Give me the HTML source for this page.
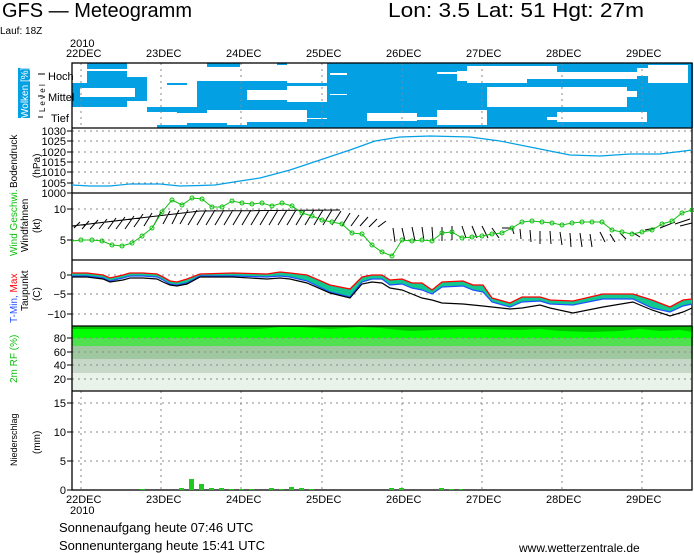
<!DOCTYPE html>
<html><head><meta charset="utf-8"><style>
html,body{margin:0;padding:0;background:#fff;width:694px;height:553px;overflow:hidden}
svg{display:block}
text{font-family:"Liberation Sans",sans-serif;fill:#000}
</style></head><body>
<svg width="694" height="553" viewBox="0 0 694 553" xmlns="http://www.w3.org/2000/svg">
<text x="2" y="17" font-size="20" textLength="190" lengthAdjust="spacingAndGlyphs">GFS — Meteogramm</text>
<text x="388" y="17" font-size="20" textLength="256" lengthAdjust="spacingAndGlyphs">Lon: 3.5 Lat: 51 Hgt: 27m</text>
<text x="0" y="34" font-size="10">Lauf: 18Z</text>
<g font-size="11">
<text x="70" y="47">2010</text>
<text x="66" y="57">22DEC</text><text x="146" y="57">23DEC</text><text x="226" y="57">24DEC</text><text x="306" y="57">25DEC</text>
<text x="386" y="57">26DEC</text><text x="466" y="57">27DEC</text><text x="546" y="57">28DEC</text><text x="626" y="57">29DEC</text>
</g>
<!-- clouds -->
<g fill="#04a0e4">
<rect x="327" y="63" width="366" height="65"/>
<rect x="87" y="63" width="40" height="6"/><rect x="207" y="63" width="33" height="4"/><rect x="277" y="63" width="10" height="2"/>
<rect x="87" y="71" width="40" height="36"/><rect x="72" y="83" width="15" height="24"/><rect x="127" y="77" width="20" height="24"/>
<rect x="167" y="83" width="20" height="2"/>
<rect x="197" y="81" width="50" height="29"/><rect x="247" y="81" width="40" height="9"/><rect x="247" y="100" width="40" height="10"/><rect x="287" y="83" width="40" height="3"/>
<rect x="287" y="102" width="40" height="8"/><rect x="307" y="108" width="20" height="10"/>
<rect x="147" y="107" width="60" height="5"/><rect x="177" y="109" width="30" height="4"/>
<rect x="157" y="125" width="170" height="3"/><rect x="187" y="123" width="40" height="5"/><rect x="247" y="122" width="80" height="6"/><rect x="307" y="119" width="20" height="9"/>
</g>
<g fill="#fff">
<rect x="80" y="88" width="55" height="9"/>
<rect x="330" y="73" width="17" height="2"/><rect x="330" y="94" width="17" height="1"/>
<rect x="437" y="72" width="20" height="2"/>
<rect x="467" y="66" width="60" height="17"/><rect x="527" y="66" width="110" height="13"/><rect x="457" y="71" width="30" height="10"/><rect x="557" y="64" width="80" height="8" fill="#04a0e4"/>
<rect x="648" y="65" width="40" height="18"/><rect x="637" y="68" width="20" height="8"/>
<rect x="487" y="87" width="140" height="20"/><rect x="497" y="92" width="130" height="12"/><rect x="627" y="91" width="10" height="6"/>
<rect x="367" y="113" width="50" height="8"/><rect x="437" y="110" width="50" height="15"/><rect x="417" y="117" width="20" height="3"/>
<rect x="557" y="112" width="90" height="10"/><rect x="547" y="117" width="20" height="3"/>
</g>
<!-- RH bands -->
<rect x="72" y="326" width="621" height="65" fill="#eaf3ea"/>
<rect x="72" y="326" width="621" height="47" fill="#c8d8c8"/>
<rect x="72" y="326" width="621" height="33" fill="#a0c8a0"/>
<rect x="72" y="326" width="621" height="20" fill="#50e050"/>
<rect x="72" y="326" width="621" height="12" fill="#00ff00"/>
<path d="M72 326H693V332L680 330L660 331L640 329L620 331L590 332L560 331L540 329L520 330L480 329L460 329L410 331L380 328L360 327L330 329L300 327L280 327L260 329L220 329L72 329Z" fill="#00c000"/>
<!-- grids -->
<g stroke="#888" stroke-dasharray="2,4" stroke-width="1">
<path d="M81 63V128M161 63V128M241 63V128M322 63V128M402 63V128M482 63V128M562 63V128M642 63V128"/>
<path d="M72 131H692M72 141H692M72 152H692M72 162H692M72 172H692M72 183H692"/>
<path d="M72 209H692M72 240H692"/>
<path d="M72 275H692M72 294H692M72 314H692"/>
<path d="M72 338H692M72 352H692M72 365H692M72 379H692"/>
<path d="M72 403H692M72 432H692M72 461H692M81 391V490M161 391V490M241 391V490M322 391V490M402 391V490M482 391V490M562 391V490M642 391V490"/>
</g>
<!-- frames -->
<g fill="none" stroke="#000" stroke-width="1.3">
<rect x="72" y="63" width="620" height="427"/>
<path d="M72 128H692M72 193H692M72 260H692M72 326H692M72 391H692"/>
</g>
<path d="M72 490H692" stroke="#000" stroke-dasharray="5,1"/>
<!-- pressure -->
<polyline fill="none" stroke="#04a0e4" stroke-width="1.2" points="72,185 90,186 110,186 130,184 160,184 180,186 200,185.5 215,185 240,181 260,178 290,170 320,160 350,150 375,141 400,137 430,136 470,137 500,141 540,149 570,155 600,156 630,154 660,154 692,150"/>
<!-- wind barbs -->
<path fill="none" stroke="#000" stroke-width="1" d="M72 226L200 211L340 210
M80 222l-6 6M89 221l-7 8M98 220l-8 9M107 219l-8 10M116 218l-8 11M125 217l-9 12M134 216l-9 13M143 214l-9 13M152 213l-8 13M161 212l-7 13M170 211l-7 13M179 210l-7 14M188 210l-8 14M197 210l-9 15M206 210l-9 15M215 210l-9 15M224 210l-9 15M233 210l-9 15M242 210l-9 15M251 210l-9 15M260 210l-9 15M269 210l-9 15M278 210l-9 15M287 210l-9 15M296 210l-9 15M305 210l-9 15M314 210l-9 15M323 210l-9 15M332 210l-9 15M341 211l-9 14M350 213l-8 13M359 215l-8 11M368 217l-8 9M377 219l-8 8M386 221l-8 6
M393 228l2 14M402 228l3 13M412 227l3 14M422 227l2 14M432 227l1 14M442 227l0 14M452 226l0 14M462 226l4 12M472 226l5 12M482 226l6 12M492 228l7 10M502 228h10l2 6M520 229l1 10M530 230l1 12M540 231l0 13M550 231l1 13M560 232l2 13M570 233l1 14M580 233l2 14M590 234l2 13M600 232l5 10M610 234l5 8M620 233l6 6M632 232l8 5M645 230l10 -2M660 228l15 -6M675 224l15 -5M680 226l12 -3"/>
<!-- wind speed -->
<polyline fill="none" stroke="#10c010" stroke-width="1" points="72,241 81,240 92,240 102,241 112,245 122,246 132,243 142,236 152,228 162,212 172,200 182,205 192,198 202,199 212,207 222,207 232,201 242,203 252,204 262,203 272,206 282,203 292,206 302,213 312,216 322,220 332,222 342,224 352,233 362,234 372,245 382,252 392,256 402,240 412,241 422,240 432,241 442,233 452,232 462,238 472,237 482,236 492,234 502,233 512,228 522,222 532,221 542,222 552,223 562,225 572,223 582,222 592,222 602,222 612,230 622,232 632,234 642,232 652,230 662,224 672,221 682,213 692,210"/>
<g fill="none" stroke="#10c010" stroke-width="1">
<circle cx="81" cy="240" r="2"/><circle cx="92" cy="240" r="2"/><circle cx="102" cy="241" r="2"/><circle cx="112" cy="245" r="2"/><circle cx="122" cy="246" r="2"/><circle cx="132" cy="243" r="2"/><circle cx="142" cy="236" r="2"/><circle cx="152" cy="228" r="2"/><circle cx="162" cy="212" r="2"/><circle cx="172" cy="200" r="2"/><circle cx="182" cy="205" r="2"/><circle cx="192" cy="198" r="2"/><circle cx="202" cy="199" r="2"/><circle cx="212" cy="207" r="2"/><circle cx="222" cy="207" r="2"/><circle cx="232" cy="201" r="2"/><circle cx="242" cy="203" r="2"/><circle cx="252" cy="204" r="2"/><circle cx="262" cy="203" r="2"/><circle cx="272" cy="206" r="2"/><circle cx="282" cy="203" r="2"/><circle cx="292" cy="206" r="2"/><circle cx="302" cy="213" r="2"/><circle cx="312" cy="216" r="2"/><circle cx="322" cy="220" r="2"/><circle cx="332" cy="222" r="2"/><circle cx="342" cy="224" r="2"/><circle cx="352" cy="233" r="2"/><circle cx="362" cy="234" r="2"/><circle cx="372" cy="245" r="2"/><circle cx="382" cy="252" r="2"/><circle cx="392" cy="256" r="2"/><circle cx="402" cy="240" r="2"/><circle cx="412" cy="241" r="2"/><circle cx="422" cy="240" r="2"/><circle cx="432" cy="241" r="2"/><circle cx="442" cy="233" r="2"/><circle cx="452" cy="232" r="2"/><circle cx="462" cy="238" r="2"/><circle cx="472" cy="237" r="2"/><circle cx="482" cy="236" r="2"/><circle cx="492" cy="234" r="2"/><circle cx="502" cy="233" r="2"/><circle cx="512" cy="228" r="2"/><circle cx="522" cy="222" r="2"/><circle cx="532" cy="221" r="2"/><circle cx="542" cy="222" r="2"/><circle cx="552" cy="223" r="2"/><circle cx="562" cy="225" r="2"/><circle cx="572" cy="223" r="2"/><circle cx="582" cy="222" r="2"/><circle cx="592" cy="222" r="2"/><circle cx="602" cy="222" r="2"/><circle cx="612" cy="230" r="2"/><circle cx="622" cy="232" r="2"/><circle cx="632" cy="234" r="2"/><circle cx="642" cy="232" r="2"/><circle cx="652" cy="230" r="2"/><circle cx="662" cy="224" r="2"/><circle cx="672" cy="221" r="2"/><circle cx="682" cy="213" r="2"/><circle cx="692" cy="210" r="2"/>
</g>
<!-- temperature -->
<polygon fill="#10c890" points="72,273 87,273 103,275 110,278 123,275 130,273 143,273 157,274 163,277 170,281 177,282 187,279 200,274 233,273 267,274 280,272 290,273 307,275 330,285 350,289 362,277 372,275 382,275 390,280 402,279 412,283 422,283 432,290 442,282 463,281 473,285 483,285 492,298 510,303 522,297 540,297 550,300 573,301 603,294 633,294 652,300 670,307 683,300 692,299 692,304 683,306 670,312 652,308 633,299 603,299 573,305 550,304 540,301 522,302 510,307 492,302 483,292 473,290 463,286 442,287 432,294 422,290 412,288 402,284 390,285 382,279 372,279 362,282 350,297 330,292 307,281 290,277 280,276 267,277 233,276 200,276 187,283 177,285 170,284 163,280 157,277 143,276 130,276 123,278 110,281 103,278 87,276 72,276"/>
<polyline fill="none" stroke="#ff0000" stroke-width="1.3" points="72,273 87,273 103,275 110,278 123,275 130,273 143,273 157,274 163,277 170,281 177,282 187,279 200,274 233,273 267,274 280,272 290,273 307,275 330,285 350,289 362,277 372,275 382,275 390,280 402,279 412,283 422,283 432,290 442,282 463,281 473,285 483,285 492,298 510,303 522,297 540,297 550,300 573,301 603,294 633,294 652,300 670,307 683,300 692,299"/>
<polyline fill="none" stroke="#2050ff" stroke-width="1.2" points="72,276 87,276 103,278 110,281 123,278 130,276 143,276 157,277 163,280 170,284 177,285 187,283 200,276 233,276 267,277 280,276 290,277 307,281 330,292 350,297 362,282 372,279 382,279 390,285 402,284 412,288 422,290 432,294 442,287 463,286 473,290 483,292 492,302 510,307 522,302 540,301 550,304 573,305 603,299 633,299 652,308 670,312 683,306 692,304"/>
<polyline fill="none" stroke="#000" stroke-width="1.2" points="72,277 87,277 103,279 110,282 123,280 130,278 143,278 157,279 163,282 170,285 177,286 187,284 200,277 233,277 267,279 280,278 290,279 307,283 330,293 350,298 362,284 372,282 382,283 390,288 402,290 412,294 422,298 432,300 442,303 463,304 473,305 483,306 492,307 510,309 522,308 540,305 550,308 573,313 603,307 633,302 652,310 670,316 683,312 692,308"/>
<!-- precip -->
<g fill="#20c820">
<rect x="140" y="489" width="5" height="1"/><rect x="179" y="488" width="5" height="2"/><rect x="189" y="479" width="5" height="11"/><rect x="199" y="484" width="5" height="6"/><rect x="209" y="488" width="5" height="2"/><rect x="219" y="488" width="5" height="2"/><rect x="229" y="489" width="5" height="1"/><rect x="239" y="489" width="5" height="1"/><rect x="249" y="489" width="5" height="1"/><rect x="269" y="488" width="5" height="2"/><rect x="279" y="489" width="5" height="1"/><rect x="289" y="487" width="5" height="3"/><rect x="299" y="488" width="5" height="2"/><rect x="309" y="489" width="5" height="1"/>
<rect x="389" y="488" width="5" height="2"/><rect x="399" y="488" width="5" height="2"/><rect x="439" y="488" width="5" height="2"/><rect x="449" y="489" width="5" height="1"/><rect x="459" y="489" width="4" height="1"/>
</g>
<!-- axis labels -->
<g font-size="11" text-anchor="end">
<text x="66" y="135">1030</text><text x="66" y="145">1025</text><text x="66" y="156">1020</text><text x="66" y="166">1015</text><text x="66" y="176">1010</text><text x="66" y="187">1005</text><text x="66" y="197">1000</text>
<text x="66" y="213">10</text><text x="66" y="244">5</text>
<text x="66" y="279">0</text><text x="66" y="298">−5</text><text x="66" y="318">−10</text>
<text x="66" y="342">80</text><text x="66" y="356">60</text><text x="66" y="369">40</text><text x="66" y="383">20</text>
<text x="66" y="407">15</text><text x="66" y="436">10</text><text x="66" y="465">5</text><text x="66" y="494">0</text>
</g>
<g stroke="#000"><path d="M67 131h5M67 141h5M67 152h5M67 162h5M67 172h5M67 183h5M67 193h5M67 209h5M67 240h5M67 275h5M67 294h5M67 314h5M67 338h5M67 352h5M67 365h5M67 379h5M67 403h5M67 432h5M67 461h5M67 490h5M38 74h7M38 96h5M38 117h5"/></g>
<text x="48" y="80" font-size="11">Hoch</text><text x="48" y="101" font-size="11">Mittel</text><text x="51" y="122" font-size="11">Tief</text>
<text font-size="8" transform="translate(45,112) rotate(-90)">L e v e l</text>
<rect x="18" y="68" width="12" height="50" fill="#04a0e4"/>
<text font-size="10" transform="translate(28,118) rotate(-90)" style="fill:#fff">Wolken [%]</text>
<g font-size="10">
<text transform="translate(17,188) rotate(-90)">Bodendruck</text>
<text transform="translate(40,178) rotate(-90)">(hPa)</text>
<text transform="translate(17,256) rotate(-90)" style="fill:#10c010">Wind Geschwi.</text>
<text transform="translate(28,252) rotate(-90)">Windfahnen</text>
<text transform="translate(40,233) rotate(-90)">(kt)</text>
<text transform="translate(17,323) rotate(-90)"><tspan style="fill:#2050ff">T-Min, </tspan><tspan style="fill:#ff0000">Max</tspan></text>
<text transform="translate(28,311) rotate(-90)">Taupunkt</text>
<text transform="translate(40,301) rotate(-90)">(C)</text>
<text transform="translate(17,383) rotate(-90)" style="fill:#10c010">2m RF (%)</text>
<text transform="translate(17,466) rotate(-90)" font-size="9">Niederschlag</text>
<text transform="translate(40,454) rotate(-90)">(mm)</text>
</g>
<g font-size="11">
<text x="66" y="503">22DEC</text><text x="146" y="503">23DEC</text><text x="226" y="503">24DEC</text><text x="306" y="503">25DEC</text>
<text x="386" y="503">26DEC</text><text x="466" y="503">27DEC</text><text x="546" y="503">28DEC</text><text x="626" y="503">29DEC</text>
<text x="70" y="514">2010</text>
</g>
<text x="59" y="532" font-size="13">Sonnenaufgang heute 07:46 UTC</text>
<text x="59" y="550" font-size="13">Sonnenuntergang heute 15:41 UTC</text>
<text x="519" y="552" font-size="12">www.wetterzentrale.de</text>
</svg>
</body></html>
